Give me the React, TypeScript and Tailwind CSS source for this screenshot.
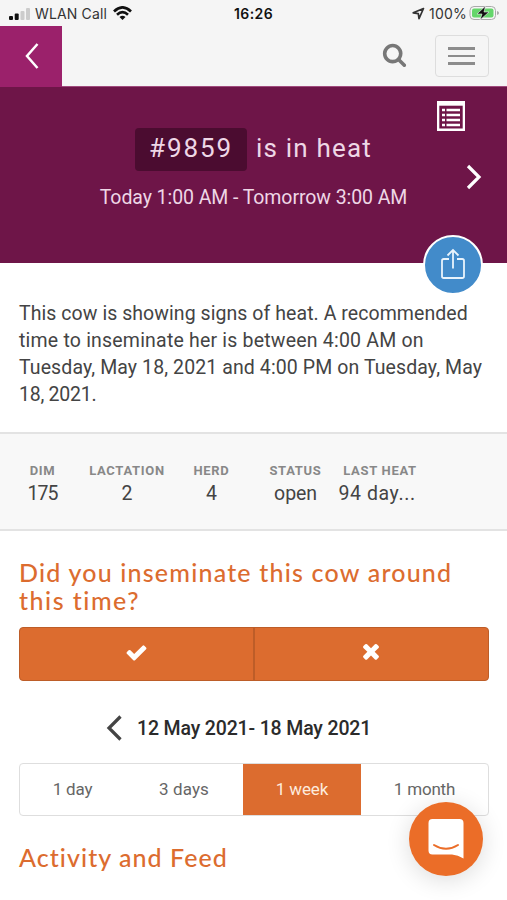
import React from 'react';

interface Stat {
  label: string;
  value: string;
  className: string;
  valueClassName: string;
}

const STATS: Stat[] = [
  { label: 'DIM', value: '175', className: 'w-[47px]', valueClassName: 'tracking-[-0.9px]' },
  { label: 'LACTATION', value: '2', className: 'w-[122px]', valueClassName: '' },
  { label: 'HERD', value: '4', className: 'w-[47px]', valueClassName: '' },
  { label: 'STATUS', value: 'open', className: 'w-[121px]', valueClassName: 'tracking-[-0.1px]' },
  { label: 'LAST HEAT', value: '94 day...', className: 'w-[48px]', valueClassName: 'tracking-[0.6px] -ml-[6px]' },
];

const RANGES = [
  { label: '1 day', className: 'w-[105px] tracking-[-0.2px]' },
  { label: '3 days', className: 'w-[118px] tracking-[0.1px]' },
  { label: '1 week', className: 'w-[118px] tracking-[-0.1px]', active: true },
  { label: '1 month', className: 'flex-1 tracking-[-0.2px]' },
];

const StatusBar: React.FC = () => (
  <div className="h-[26px] px-[9px] grid grid-cols-3 items-center text-[14px] leading-none font-['Inter'] text-[#333]">
    <div className="flex items-center">
      <svg width="22" height="13" viewBox="0 0 22 13" className="mt-[3px]">
        <rect x="0" y="8" width="4" height="4" rx="1" fill="#111" />
        <rect x="5.7" y="5.5" width="4" height="6.5" rx="1" fill="#111" />
        <rect x="11.5" y="3" width="4" height="9" rx="1" fill="#ccc" />
        <rect x="17" y="0" width="4" height="12" rx="1" fill="#ccc" />
      </svg>
      <span className="ml-1 mt-[2px] whitespace-nowrap tracking-[0.15px]">WLAN Call</span>
      <svg width="19" height="15" viewBox="0 0 19 15" className="ml-[6px] mt-px shrink-0" fill="none" stroke="#111" strokeWidth="2.7">
        <path d="M1 5.4Q9.5-2.6 18 5.4" />
        <path d="M4 8.7Q9.5 3.7 15 8.7" />
        <path d="M6.5 11Q9.5 8.6 12.5 11L9.5 14Z" fill="#111" stroke="none" />
      </svg>
    </div>
    <span className="mt-[2px] text-center font-semibold tracking-[0.4px] text-[#111]">16:26</span>
    <div className="flex items-center justify-end">
      <svg width="13" height="13" viewBox="0 0 13 13" fill="none" stroke="#333" strokeWidth="1.7" strokeLinejoin="round">
        <path d="M11.5 1.5 1.2 5.8 6.3 6.6 7 11.6Z" />
      </svg>
      <span className="ml-1 mt-[2px] tracking-[0.2px]">100%</span>
      <svg width="31" height="16" viewBox="0 0 31 16" className="ml-[2px] -mr-[2px]">
        <rect x="1" y="1.5" width="25.5" height="13" rx="4" fill="#f5f5f5" stroke="#aaa" />
        <rect x="3" y="3.5" width="21.5" height="9" rx="2" fill="#65d66b" />
        <path d="M28 6v4q2-.5 2-2t-2-2" fill="#aaa" />
        <path d="M16.5 1 8 9h5l-2 6 9-8h-5Z" fill="#111" stroke="#f5f5f5" strokeWidth=".6" />
      </svg>
    </div>
  </div>
);

const Navbar: React.FC = () => (
  <nav className="h-[61px] flex items-start border-b border-[#a04b7d]">
    <button className="w-[62px] h-[61px] shrink-0 flex items-center justify-center bg-[#9b216b]">
      <svg width="14" height="28" viewBox="0 0 14 28" fill="none" stroke="#fff" strokeWidth="2.5" className="ml-px -mt-[2px]">
        <path d="M12.5 2 2 14 12.5 26" />
      </svg>
    </button>
    <div className="flex-1 h-full flex items-center justify-end pr-[18px]">
      <svg width="25" height="25" viewBox="0 0 1792 1792" fill="#777" className="mr-[28px] -mt-[3px]">
        <path d="M1216 832q0-185-131.5-316.5t-316.5-131.5-316.5 131.5-131.5 316.5 131.5 316.5 316.5 131.5 316.5-131.5 131.5-316.5zm512 832q0 52-38 90t-90 38q-54 0-90-38l-343-342q-179 124-399 124-143 0-273.5-55.5t-225-150-150-225-55.5-273.5 55.5-273.5 150-225 225-150 273.5-55.5 273.5 55.5 225 150 150 225 55.5 273.5q0 220-124 399l343 343q37 37 37 90z" />
      </svg>
      <button className="w-[54px] h-[42px] pr-px flex flex-col items-center justify-center gap-[5px] rounded border border-[#ddd]">
        <span className="w-[27px] h-[2.5px] bg-[#8c8c8c]" />
        <span className="w-[27px] h-[2.5px] bg-[#8c8c8c]" />
        <span className="w-[27px] h-[2.5px] bg-[#8c8c8c]" />
      </button>
    </div>
  </nav>
);

const Hero: React.FC = () => (
  <header className="relative h-[176px] pt-[41px] flex flex-col items-center bg-[#6e1548] text-[#eed7e6]">
    <h1 className="flex items-center whitespace-nowrap text-[26px] leading-none">
      <span className="w-[112px] h-[43px] mr-[9px] flex items-center justify-center rounded bg-[#4b0c30] pb-1 tracking-[1.9px]">
        #9859
      </span>
      <span className="pb-1 tracking-[1.2px]">is in heat</span>
    </h1>
    <p className="mt-[13px] text-[19.5px] leading-[27px] whitespace-nowrap tracking-[-0.08px]">
      Today 1:00 AM - Tomorrow 3:00 AM
    </p>
    <svg width="28" height="30" viewBox="0 0 28 30" className="absolute left-[437px] top-[14px]">
      <path d="M0 0h28v30H0Z" fill="#fff" />
      <path d="M2.3 4.7h23.4v22.8H2.3Z" fill="#6e1548" />
      <path d="M5 9h3M5 14h3M5 19h3M5 24h3M9.5 9H23M9.5 14H23M9.5 19H23M9.5 24H23" stroke="#fff" strokeWidth="2.5" />
    </svg>
    <svg width="16" height="26" viewBox="0 0 16 26" fill="none" stroke="#fff" strokeWidth="3.2" className="absolute left-[466px] top-[77px]">
      <path d="M2 2 13 13 2 24" />
    </svg>
    <button className="absolute left-[423px] top-[148px] size-[60px] flex items-center justify-center rounded-full border-2 border-white bg-[#428bca]">
      <svg width="26" height="32" viewBox="0 0 26 32" fill="none" stroke="#e8f3fc" strokeWidth="1.8" className="-mt-[2px]">
        <path d="M9 11H3.8Q2 11 2 12.8V28.2Q2 30 3.8 30H22.2Q24 30 24 28.2V12.8Q24 11 22.2 11H17" />
        <path d="M13 20.5V2M7.5 7.5 13 2 18.5 7.5" />
      </svg>
    </button>
  </header>
);

const Summary: React.FC = () => (
  <p className="h-[169px] pl-[19px] pt-[37px] text-[19.5px] leading-[27px] whitespace-nowrap text-[#444]">
    <span className="block tracking-[0.06px]">This cow is showing signs of heat. A recommended</span>
    <span className="block tracking-[0.2px]">time to inseminate her is between 4:00 AM on</span>
    <span className="block tracking-[0.1px]">Tuesday, May 18, 2021 and 4:00 PM on Tuesday, May</span>
    <span className="block tracking-[-0.25px]">18, 2021.</span>
  </p>
);

const StatsBar: React.FC = () => (
  <section className="h-[99px] pl-[19px] pt-[28px] flex border-y-2 border-[#e3e3e3] bg-[#f8f8f8]">
    {STATS.map((stat) => (
      <div key={stat.label} className={`${stat.className} shrink-0 flex flex-col items-center whitespace-nowrap`}>
        <span className="text-[13px] leading-[17px] font-bold tracking-[0.7px] text-[#888]">{stat.label}</span>
        <span className={`${stat.valueClassName} text-[19.5px] leading-[29px] text-[#444]`}>{stat.value}</span>
      </div>
    ))}
  </section>
);

const Insemination: React.FC = () => (
  <section className="px-[19px] pt-[27px]">
    <h2 className="font-['Lato'] font-medium text-[25px] leading-[28px] whitespace-nowrap text-[#dc6c2f]">
      <span className="block tracking-[1.2px]">Did you inseminate this cow around</span>
      <span className="block tracking-[1.5px]">this time?</span>
    </h2>
    <div className="mt-[13px] h-[54px] w-[470px] flex rounded border border-[#bd5d28] bg-[#dc6c2f]">
      <button className="flex-1 flex items-center justify-center border-r-2 border-[#bd5d28]">
        <svg width="23" height="23" viewBox="0 0 1792 1792" fill="#fff" className="-mt-[3px]">
          <path d="M1671 566q0 40-28 68l-724 724-136 136q-28 28-68 28t-68-28l-136-136-362-362q-28-28-28-68t28-68l136-136q28-28 68-28t68 28l294 295 656-657q28-28 68-28t68 28l136 136q28 28 28 68z" />
        </svg>
      </button>
      <button className="flex-1 flex items-center justify-center">
        <svg width="24" height="24" viewBox="0 0 1792 1792" fill="#fff" className="-mt-1.5 mr-px">
          <path d="M1490 1322q0 40-28 68l-136 136q-28 28-68 28t-68-28l-294-294-294 294q-28 28-68 28t-68-28l-136-136q-28-28-28-68t28-68l294-294-294-294q-28-28-28-68t28-68l136-136q28-28 68-28t68 28l294 294 294-294q28-28 68-28t68 28l136 136q28 28 28 68t-28 68l-294 294 294 294q28 28 28 68z" />
        </svg>
      </button>
    </div>
  </section>
);

const ActivityChart: React.FC = () => (
  <section className="px-[19px] pt-[33px]">
    <div className="h-[28px] pl-[87px] flex items-center">
      <svg width="16" height="26" viewBox="0 0 16 26" fill="none" stroke="#444" strokeWidth="3.2">
        <path d="M14.5 1.5 3 13 14.5 24.5" />
      </svg>
      <span className="ml-[15px] mt-px text-[19.5px] font-medium whitespace-nowrap tracking-[-0.15px] text-[#2b2b2b]">
        12 May 2021- 18 May 2021
      </span>
    </div>
    <div className="mt-[21px] h-[53px] w-[470px] flex rounded border-[1.5px] border-[#dedede] text-[17px] text-[#666]">
      {RANGES.map((range) => (
        <button
          key={range.label}
          className={`${range.className} ${range.active ? 'bg-[#dc6c2f] text-[#fdebdd]' : ''}`}
        >
          {range.label}
        </button>
      ))}
    </div>
    <h2 className="mt-[27px] font-['Lato'] font-medium text-[25px] leading-[28px] tracking-[1.05px] text-[#dc6c2f]">
      Activity and Feed
    </h2>
  </section>
);

const ChatLauncher: React.FC = () => (
  <button className="fixed left-[409px] top-[802px] size-[74px] rounded-full bg-[#eb6d28] shadow-[0_4px_24px_rgba(0,0,0,0.14)]">
    <svg width="74" height="74" viewBox="0 0 74 74">
      <path d="M23.5 17h27Q54.5 17 54.5 21V56.5Q49 53 43 52.5H23.5Q19.5 52.5 19.5 48.5V21Q19.5 17 23.5 17Z" fill="#fff" />
      <path d="M25 43Q37 50.5 49 43" fill="none" stroke="#eb6d28" strokeWidth="2" strokeLinecap="round" />
    </svg>
  </button>
);

export default function App() {
  return (
    <main className="w-full h-[900px] overflow-hidden bg-white font-['Roboto',sans-serif]">
      <div className="bg-[#f5f5f5]">
        <StatusBar />
        <Navbar />
      </div>
      <Hero />
      <Summary />
      <StatsBar />
      <Insemination />
      <ActivityChart />
      <ChatLauncher />
    </main>
  );
}
